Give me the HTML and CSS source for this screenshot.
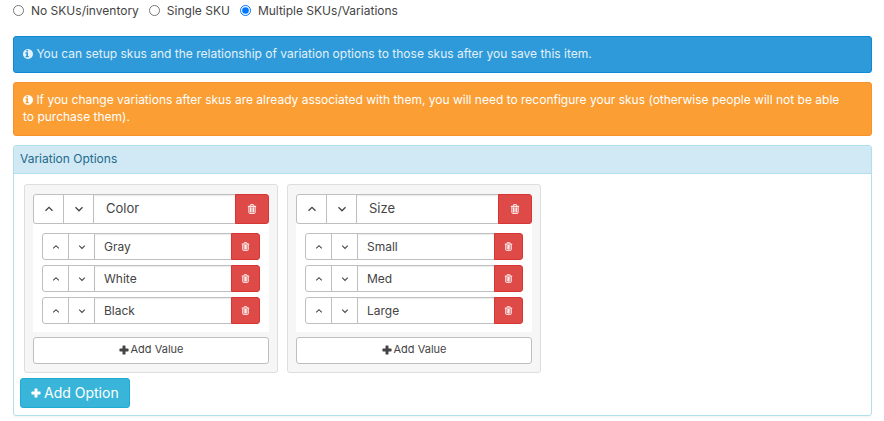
FILE: index.html
```
<!DOCTYPE html>
<html lang="en">
<head>
    <meta charset="UTF-8">
    <meta name="viewport" content="width=device-width, initial-scale=1.0">
    <title>Variation Options</title>
    <link rel="stylesheet" href="styles.css">
</head>
<body>
    <svg class="sprite" aria-hidden="true">
        <symbol id="info" viewBox="128 128 1536 1536">
            <path d="M1024 1376v-160q0-14-9-23t-23-9h-96v-512q0-14-9-23t-23-9h-320q-14 0-23 9t-9 23v160q0 14 9 23t23 9h96v320h-96q-14 0-23 9t-9 23v160q0 14 9 23t23 9h448q14 0 23-9t9-23zM896 480v-160q0-14-9-23t-23-9h-192q-14 0-23 9t-9 23v160q0 14 9 23t23 9h192q14 0 23-9t9-23zM1664 896q0 209-103 385.5t-279.5 279.5-385.5 103-385.5-103-279.5-279.5-103-385.5 103-385.5 279.5-279.5 385.5-103 385.5 103 279.5 279.5 103 385.5z"/>
        </symbol>
        <symbol id="plus" viewBox="0 0 12 12">
            <path d="M5 .5h2q.8 0 .8.8v2.900h2.900q.8 0 .8.8v2q0 .8-.8.8H7.800v2.900q0 .8-.8.8H5q-.8 0-.8-.8V7.800H1.300q-.8 0-.8-.8V5q0-.8.8-.8h2.900V1.300q0-.8.8-.8z"/>
        </symbol>
        <symbol id="up" viewBox="0 0 10 10">
            <path d="M1.500 6.800 5 3.300l3.500 3.500" fill="none" stroke="currentColor" stroke-width="1.300"/>
        </symbol>
        <symbol id="down" viewBox="0 0 10 10">
            <path d="M1.500 3.300 5 6.800l3.500-3.500" fill="none" stroke="currentColor" stroke-width="1.300"/>
        </symbol>
        <symbol id="trash" viewBox="0 0 12 12">
            <path d="M4 2.500V1.500q0-.7.7-.7h2.600q.7 0 .7.7v1M1 2.800h10M2.300 3v7.300q0 .9.900.9h5.600q.9 0 .9-.9V3M4.300 4v6M6 4v6M7.700 4v6" fill="none" stroke="currentColor" stroke-width="1.200"/>
        </symbol>
    </svg>

    <div class="types">
        <label><input type="radio" name="sku">No SKUs/inventory</label>
        <label><input type="radio" name="sku">Single SKU</label>
        <label><input type="radio" name="sku" checked>Multiple SKUs/Variations</label>
    </div>

    <div class="alert info"><svg class="icon"><use href="#info"/></svg> You can setup skus and the relationship of variation options to those skus after you save this item.</div>
    <div class="alert warning"><svg class="icon"><use href="#info"/></svg> If you change variations after skus are already associated with them, you will need to reconfigure your skus (otherwise people will not be able to purchase them).</div>

    <div class="panel">
        <div class="panel-heading">Variation Options</div>
        <div class="panel-body">
            <div class="options">
                <div class="well">
                    <div class="group">
                        <button class="btn" aria-label="Move up"><svg class="icon"><use href="#up"/></svg></button>
                        <button class="btn" aria-label="Move down"><svg class="icon"><use href="#down"/></svg></button>
                        <input type="text" value="Color" aria-label="Option name">
                        <button class="btn danger" aria-label="Delete"><svg class="icon"><use href="#trash"/></svg></button>
                    </div>
                    <div class="values">
                        <div class="group small">
                            <button class="btn" aria-label="Move up"><svg class="icon"><use href="#up"/></svg></button>
                            <button class="btn" aria-label="Move down"><svg class="icon"><use href="#down"/></svg></button>
                            <input type="text" value="Gray" aria-label="Value">
                            <button class="btn danger" aria-label="Delete"><svg class="icon"><use href="#trash"/></svg></button>
                        </div>
                        <div class="group small">
                            <button class="btn" aria-label="Move up"><svg class="icon"><use href="#up"/></svg></button>
                            <button class="btn" aria-label="Move down"><svg class="icon"><use href="#down"/></svg></button>
                            <input type="text" value="White" aria-label="Value">
                            <button class="btn danger" aria-label="Delete"><svg class="icon"><use href="#trash"/></svg></button>
                        </div>
                        <div class="group small">
                            <button class="btn" aria-label="Move up"><svg class="icon"><use href="#up"/></svg></button>
                            <button class="btn" aria-label="Move down"><svg class="icon"><use href="#down"/></svg></button>
                            <input type="text" value="Black" aria-label="Value">
                            <button class="btn danger" aria-label="Delete"><svg class="icon"><use href="#trash"/></svg></button>
                        </div>
                    </div>
                    <button class="btn add-value"><svg class="icon"><use href="#plus"/></svg> Add Value</button>
                </div>
                <div class="well">
                    <div class="group">
                        <button class="btn" aria-label="Move up"><svg class="icon"><use href="#up"/></svg></button>
                        <button class="btn" aria-label="Move down"><svg class="icon"><use href="#down"/></svg></button>
                        <input type="text" value="Size" aria-label="Option name">
                        <button class="btn danger" aria-label="Delete"><svg class="icon"><use href="#trash"/></svg></button>
                    </div>
                    <div class="values">
                        <div class="group small">
                            <button class="btn" aria-label="Move up"><svg class="icon"><use href="#up"/></svg></button>
                            <button class="btn" aria-label="Move down"><svg class="icon"><use href="#down"/></svg></button>
                            <input type="text" value="Small" aria-label="Value">
                            <button class="btn danger" aria-label="Delete"><svg class="icon"><use href="#trash"/></svg></button>
                        </div>
                        <div class="group small">
                            <button class="btn" aria-label="Move up"><svg class="icon"><use href="#up"/></svg></button>
                            <button class="btn" aria-label="Move down"><svg class="icon"><use href="#down"/></svg></button>
                            <input type="text" value="Med" aria-label="Value">
                            <button class="btn danger" aria-label="Delete"><svg class="icon"><use href="#trash"/></svg></button>
                        </div>
                        <div class="group small">
                            <button class="btn" aria-label="Move up"><svg class="icon"><use href="#up"/></svg></button>
                            <button class="btn" aria-label="Move down"><svg class="icon"><use href="#down"/></svg></button>
                            <input type="text" value="Large" aria-label="Value">
                            <button class="btn danger" aria-label="Delete"><svg class="icon"><use href="#trash"/></svg></button>
                        </div>
                    </div>
                    <button class="btn add-value"><svg class="icon"><use href="#plus"/></svg> Add Value</button>
                </div>
            </div>
            <button class="btn add-option"><svg class="icon"><use href="#plus"/></svg> Add Option</button>
        </div>
    </div>
</body>
</html>
```
FILE: styles.css
```
*{
    box-sizing: border-box;
}
body{
    margin: 0;
    padding: 2px 12px 5px 13px;
    background: #fff;
    color: #444;
    font: 12px/17px Inter, "Open Sans", sans-serif;
}
button, input{
    margin: 0;
    color: inherit;
    font: inherit;
}
.sprite{
    display: none;
}
.icon{
    width: 10px;
    height: 10px;
    fill: currentColor;
    flex: none;
}
.types{
    display: flex;
    gap: 10px;
    margin-bottom: 17px;
}
.types label{
    display: flex;
    align-items: center;
}
.types input{
    width: 11px;
    height: 11px;
    margin-right: 7px;
}
.alert{
    margin-bottom: 9px;
    padding: 8px 24px 10px 9px;
    border: 1px solid;
    border-radius: 3px;
    color: #fff;
}
.alert .icon{
    vertical-align: -1px;
}
.info{
    background: #2e9ad9;
    border-color: #0e8ad4;
    color: #e3f1fa;
}
.warning{
    background: #fb9e33;
    border-color: #f6922b;
}
.panel{
    border: 1px solid #b2e0ea;
    border-radius: 3px;
    box-shadow: 0 1px 1px rgba(0,0,0,.05);
}
.panel-heading{
    padding: 4px 6px 6px;
    background: #d0e9f5;
    border-bottom: 1px solid #b2e0ea;
    color: #226a8b;
}
.panel-body{
    padding: 10px 6px 7px;
}
.options{
    display: flex;
    flex-wrap: wrap;
    gap: 9px;
    margin: 0 4px 5px;
}
.well{
    width: 254px;
    padding: 9px 8px 8px;
    background: #f6f6f6;
    border: 1px solid #dedede;
    border-radius: 3px;
}
.btn{
    display: flex;
    align-items: center;
    justify-content: center;
    padding: 0;
    background: #fff;
    border: 1px solid #bfbfbf;
    border-radius: 3px;
    cursor: pointer;
}
.group{
    display: flex;
    height: 30px;
    font-size: 13px;
}
.group > * + *{
    margin-left: -1px;
}
.group input{
    flex: 1;
    min-width: 0;
    padding: 0 12px 1px;
    background: #fff;
    border: 1px solid #bfbfbf;
    border-radius: 0;
    box-shadow: inset 0 1px 1px rgba(0,0,0,.08);
}
.group .btn{
    width: 31px;
    border-radius: 0;
}
.group .btn:first-child{
    border-radius: 3px 0 0 3px;
}
.group .danger{
    position: relative;
    width: 34px;
    background: #de4a48;
    border-color: #d73534;
    border-radius: 0 3px 3px 0;
    color: #fff;
}
.values{
    display: flex;
    flex-direction: column;
    gap: 5px;
    margin-bottom: 5px;
    padding: 9px 9px 8px;
    background: #fff;
}
.small{
    height: 27px;
    font-size: 12px;
}
.small input{
    padding: 0 9px 1px;
}
.small .btn{
    width: 27px;
}
.small .icon{
    width: 8px;
    height: 8px;
}
.small .danger{
    width: 29px;
}
.small .danger .icon{
    width: 9px;
    height: 9px;
}
.add-value{
    gap: 2px;
    width: 100%;
    height: 27px;
    padding-bottom: 2px;
    font-size: 11px;
}
.add-option{
    gap: 3px;
    height: 30px;
    padding: 0 10px 1px;
    background: #39b5d9;
    border-color: #20abd3;
    color: #fff;
    font-size: 14px;
}
```
